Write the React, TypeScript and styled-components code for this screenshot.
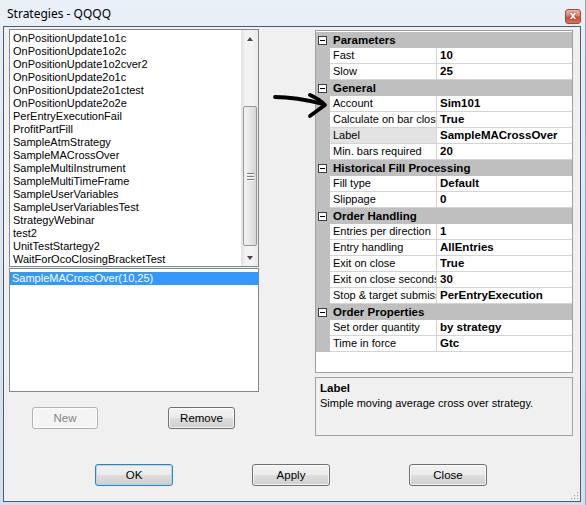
import React from "react";
import styled, { createGlobalStyle } from "styled-components";

const GlobalStyle = createGlobalStyle`
  html, body {
    margin: 0;
    padding: 0;
    background: #ffffff;
  }
  body {
    font-family: "Liberation Sans", Arial, sans-serif;
    font-size: 11px;
    color: #000;
  }
`;

const Window = styled.div`
  position: relative;
  width: 586px;
  height: 505px;
  box-sizing: border-box;
  padding: 0 4px 3px 3px;
  display: flex;
  flex-direction: column;
  background: linear-gradient(180deg, #e9f0f8 0%, #dde7f2 40%, #d2dfed 100%);
  border-right: 1px solid #6fb0dc;
`;

const TitleBar = styled.div`
  height: 26px;
  display: flex;
  align-items: center;
  justify-content: space-between;
  padding-left: 4px;
  font-family: "Noto Sans", "Open Sans", sans-serif;
  font-size: 12px;
  color: #000;
`;

const CloseButton = styled.div`
  width: 16px;
  height: 15px;
  align-self: flex-start;
  margin-top: 9px;
  box-sizing: border-box;
  border: 1px solid #9a4a3c;
  border-radius: 3px;
  background: linear-gradient(180deg, #eeb6a8 0%, #dc826f 45%, #c94c36 55%, #d9735a 100%);
  color: #fff;
  font-family: "DejaVu Sans", sans-serif;
  font-weight: bold;
  font-size: 10px;
  line-height: 12px;
  text-align: center;
  text-shadow: 0 0 2px #6a1a10;
`;

const Client = styled.div`
  position: relative;
  flex: 1;
  display: flex;
  flex-direction: column;
  background: #f0f0f0;
  border: 1px solid #4d5b6b;
`;

const Main = styled.div`
  flex: 1;
  display: flex;
  padding: 2px 0 0 5px;
`;

const LeftPane = styled.div`
  width: 250px;
  display: flex;
  flex-direction: column;
`;

const RightPane = styled.div`
  width: 258px;
  margin-left: 56px;
  display: flex;
  flex-direction: column;
`;

const ListBox = styled.div<{ $height: number }>`
  height: ${(p) => p.$height}px;
  box-sizing: border-box;
  border: 1px solid #828790;
  background: #fff;
  display: flex;
  margin-bottom: 1px;
`;

const Items = styled.div<{ $padTop: number }>`
  flex: 1;
  padding-top: ${(p) => p.$padTop}px;
  overflow: hidden;
`;

const Item = styled.div<{ $selected?: boolean }>`
  height: 13px;
  line-height: 13px;
  padding-left: ${(p) => (p.$selected ? "2px" : "3px")};
  white-space: nowrap;
  background: ${(p) => (p.$selected ? "#3399ff" : "transparent")};
  color: ${(p) => (p.$selected ? "#fff" : "#000")};
`;

const ScrollBar = styled.div`
  width: 17px;
  display: flex;
  flex-direction: column;
  background: linear-gradient(90deg, #e3e3e3 0%, #f3f3f3 30%, #f3f3f3 70%, #e8e8e8 100%);
`;

const ArrowBox = styled.div`
  height: 17px;
  display: flex;
  align-items: center;
  justify-content: center;
`;

const ArrowUp = styled.div`
  width: 0;
  height: 0;
  border-left: 3.5px solid transparent;
  border-right: 3.5px solid transparent;
  border-bottom: 4px solid #4a4a4a;
`;

const ArrowDown = styled(ArrowUp)`
  border-bottom: none;
  border-top: 4px solid #4a4a4a;
`;

const Track = styled.div`
  flex: 1;
  padding: 59px 1px 0 2px;
`;

const Thumb = styled.div`
  height: 140px;
  box-sizing: border-box;
  border: 1px solid #979797;
  border-radius: 2px;
  background: linear-gradient(90deg, #f4f4f4 0%, #e6e6e6 50%, #d6d6d6 100%);
  display: flex;
  flex-direction: column;
  align-items: center;
  justify-content: center;
  gap: 2px;
`;

const Grip = styled.div`
  width: 7px;
  height: 1px;
  background: #7a7a7a;
  box-shadow: 0 1px 0 #fff;
`;

const ButtonRow = styled.div`
  display: flex;
  padding: 14px 0 0 23px;
  gap: 70px;
`;

const Button = styled.button<{ $width: number; $default?: boolean }>`
  width: ${(p) => p.$width}px;
  height: 22px;
  padding: 0;
  box-sizing: border-box;
  font-family: "Liberation Sans", Arial, sans-serif;
  font-size: 11.5px;
  color: #000;
  border-radius: 3px;
  border: 1px solid ${(p) => (p.$default ? "#3c7fb1" : "#707070")};
  background: linear-gradient(180deg, #f2f2f2 0%, #ebebeb 48%, #dddddd 52%, #cfcfcf 100%);
  box-shadow: inset 0 0 0 1px ${(p) => (p.$default ? "#a8dbf8" : "rgba(255,255,255,0.75)")};

  &:disabled {
    border-color: #adb2b5;
    background: #f4f4f4;
    color: #838383;
    box-shadow: inset 0 0 0 1px #fcfcfc;
  }
`;

const Grid = styled.div`
  height: 343px;
  box-sizing: border-box;
  border: 1px solid #a0a0a0;
  background: #fff;
  padding-top: 1px;
  margin-top: 1px;
`;

const CategoryRow = styled.div`
  height: 16px;
  display: flex;
  align-items: center;
  background: #bfbfbf;
  font-size: 11.5px;
  font-weight: bold;
`;

const Expander = styled.div`
  width: 9px;
  height: 9px;
  box-sizing: border-box;
  border: 1px solid #3c3c3c;
  background: #fff;
  margin: 0 6px 0 2px;
  display: flex;
  align-items: center;
  justify-content: center;

  &::after {
    content: "";
    width: 5px;
    height: 1px;
    background: #000;
  }
`;

const PropRow = styled.div`
  height: 16px;
  display: grid;
  grid-template-columns: 14px 107px 1fr;
`;

const Margin = styled.div`
  background: #bfbfbf;
`;

const LabelCell = styled.div<{ $selected?: boolean }>`
  box-sizing: border-box;
  border-bottom: 1px solid #d4d4d4;
  border-right: 1px solid #d4d4d4;
  padding-left: 3px;
  line-height: 15px;
  white-space: nowrap;
  overflow: hidden;
  background: ${(p) => (p.$selected ? "#e3e3e3" : "#fff")};
`;

const ValueCell = styled.div`
  box-sizing: border-box;
  border-bottom: 1px solid #d4d4d4;
  padding-left: 3px;
  line-height: 15px;
  font-size: 11.5px;
  font-weight: bold;
  white-space: nowrap;
  overflow: hidden;
`;

const Description = styled.div`
  height: 59px;
  margin-top: 4px;
  box-sizing: border-box;
  border: 1px solid #a0a0a0;
  background: #f0f0f0;
  padding: 3px 4px;
`;

const DescTitle = styled.div`
  font-weight: bold;
  font-size: 11.5px;
  line-height: 14px;
`;

const DescText = styled.div`
  line-height: 16px;
`;

const Footer = styled.div`
  display: flex;
  gap: 79px;
  padding: 0 0 15px 91px;
`;

const Annotation = styled.svg`
  position: absolute;
  left: 268px;
  top: 88px;
  overflow: visible;
`;

const SizeGrip = styled.svg`
  position: absolute;
  right: 1px;
  bottom: 1px;
`;

const strategies = [
  "OnPositionUpdate1o1c",
  "OnPositionUpdate1o2c",
  "OnPositionUpdate1o2cver2",
  "OnPositionUpdate2o1c",
  "OnPositionUpdate2o1ctest",
  "OnPositionUpdate2o2e",
  "PerEntryExecutionFail",
  "ProfitPartFill",
  "SampleAtmStrategy",
  "SampleMACrossOver",
  "SampleMultiInstrument",
  "SampleMultiTimeFrame",
  "SampleUserVariables",
  "SampleUserVariablesTest",
  "StrategyWebinar",
  "test2",
  "UnitTestStartegy2",
  "WaitForOcoClosingBracketTest",
];

type Category = { name: string; props: [string, string][] };

const categories: Category[] = [
  { name: "Parameters", props: [["Fast", "10"], ["Slow", "25"]] },
  {
    name: "General",
    props: [
      ["Account", "Sim101"],
      ["Calculate on bar close", "True"],
      ["Label", "SampleMACrossOver"],
      ["Min. bars required", "20"],
    ],
  },
  {
    name: "Historical Fill Processing",
    props: [["Fill type", "Default"], ["Slippage", "0"]],
  },
  {
    name: "Order Handling",
    props: [
      ["Entries per direction", "1"],
      ["Entry handling", "AllEntries"],
      ["Exit on close", "True"],
      ["Exit on close seconds", "30"],
      ["Stop & target submission", "PerEntryExecution"],
    ],
  },
  {
    name: "Order Properties",
    props: [["Set order quantity", "by strategy"], ["Time in force", "Gtc"]],
  },
];

export default function App() {
  return (
    <>
      <GlobalStyle />
      <Window>
        <TitleBar>
          <span>Strategies - QQQQ</span>
          <CloseButton>x</CloseButton>
        </TitleBar>
        <Client>
          <Main>
            <LeftPane>
              <ListBox $height={238}>
                <Items $padTop={2}>
                  {strategies.map((s) => (
                    <Item key={s}>{s}</Item>
                  ))}
                </Items>
                <ScrollBar>
                  <ArrowBox>
                    <ArrowUp />
                  </ArrowBox>
                  <Track>
                    <Thumb>
                      <Grip />
                      <Grip />
                      <Grip />
                    </Thumb>
                  </Track>
                  <ArrowBox>
                    <ArrowDown />
                  </ArrowBox>
                </ScrollBar>
              </ListBox>
              <ListBox $height={124}>
                <Items $padTop={3}>
                  <Item $selected>SampleMACrossOver(10,25)</Item>
                </Items>
              </ListBox>
              <ButtonRow>
                <Button $width={66} disabled>
                  New
                </Button>
                <Button $width={67}>Remove</Button>
              </ButtonRow>
            </LeftPane>
            <RightPane>
              <Grid>
                {categories.map((c) => (
                  <React.Fragment key={c.name}>
                    <CategoryRow>
                      <Expander />
                      {c.name}
                    </CategoryRow>
                    {c.props.map(([label, value]) => (
                      <PropRow key={label}>
                        <Margin />
                        <LabelCell $selected={label === "Label"}>{label}</LabelCell>
                        <ValueCell>{value}</ValueCell>
                      </PropRow>
                    ))}
                  </React.Fragment>
                ))}
              </Grid>
              <Description>
                <DescTitle>Label</DescTitle>
                <DescText>Simple moving average cross over strategy.</DescText>
              </Description>
            </RightPane>
          </Main>
          <Footer>
            <Button $width={78} $default>
              OK
            </Button>
            <Button $width={78}>Apply</Button>
            <Button $width={78}>Close</Button>
          </Footer>
          <SizeGrip width="10" height="10" viewBox="0 0 10 10">
            {[
              [8, 2],
              [8, 5],
              [5, 5],
              [8, 8],
              [5, 8],
              [2, 8],
            ].map(([x, y]) => (
              <rect key={`${x}-${y}`} x={x} y={y} width="1.2" height="1.2" fill="#a0a0a0" />
            ))}
          </SizeGrip>
        </Client>
        <Annotation width="62" height="34" viewBox="0 0 62 34">
          <g fill="none" stroke="#000" strokeWidth="3.8" strokeLinecap="round" strokeLinejoin="round">
            <path d="M7 9 Q28 9 55 16" />
            <path d="M42 7 Q51 11 57 17 Q50 22 42 28" />
          </g>
        </Annotation>
      </Window>
    </>
  );
}
